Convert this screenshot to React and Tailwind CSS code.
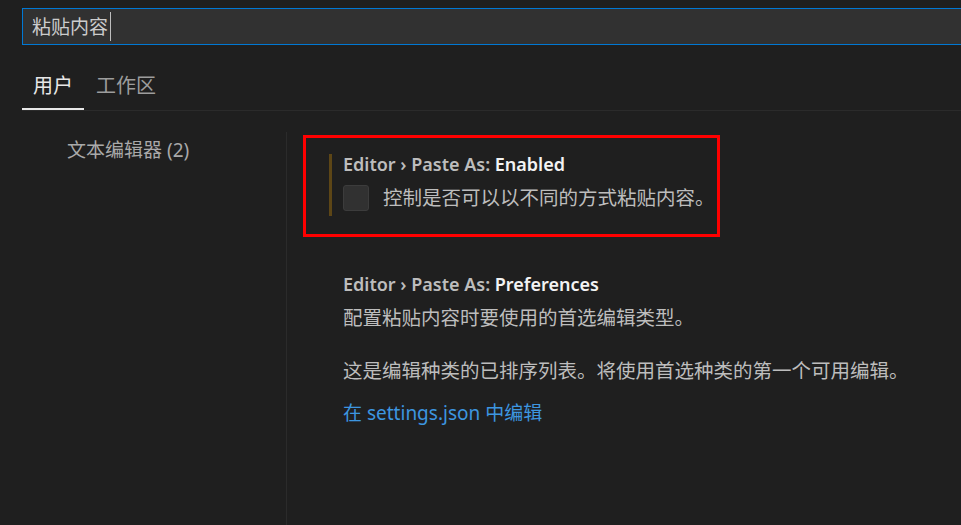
import React from "react";

const FONT = {
  fontFamily: '"Noto Sans", "Noto Sans CJK SC", sans-serif',
};

function SettingTitle({ prefix, label }) {
  return (
    <div className="text-[18px] leading-[20px] font-semibold whitespace-nowrap">
      <span className="text-[#bdbdbd]">{prefix}</span>
      <span className="text-[#f3f3f3]">{label}</span>
    </div>
  );
}

export default function App() {
  return (
    <div
      className="w-[961px] h-[525px] bg-[#1f1f1f] overflow-hidden flex flex-col"
      style={FONT}
    >
      {/* search */}
      <div className="pt-[8px] pl-[22px]">
        <div className="h-[37px] bg-[#313131] border-l border-t border-b border-[#0078d4] flex items-center pl-[9px]">
          <span className="text-[19px] text-[#cccccc] leading-none mt-[2px]">粘贴内容</span>
          <span className="w-px h-[29px] bg-[#bdbdbd] ml-[2px]" />
        </div>
      </div>

      {/* tabs */}
      <div className="mt-[18px] ml-[22px] flex border-b border-[#2b2b2b]">
        <div className="h-[47px] px-[11px] pt-[1px] flex items-center border-b-2 border-[#e7e7e7] text-[20px] text-[#e7e7e7]">
          用户
        </div>
        <div className="h-[47px] px-[12px] pt-[1px] flex items-center border-b-2 border-transparent text-[20px] text-[#9d9d9d]">
          工作区
        </div>
      </div>

      {/* body */}
      <div className="flex flex-1 mt-[21px] min-h-0">
        <div className="w-[287px] shrink-0 border-r border-[#2b2b2b] pt-[4px] pl-[67px]">
          <div className="text-[19px] leading-[28px] text-[#a9a9a9] whitespace-nowrap">
            文本编辑器 (2)
          </div>
        </div>

        <div className="flex-1 pl-[16px]">
          {/* highlighted setting */}
          <div className="mt-[3px] w-[417px] h-[102px] border-[3px] border-[#ff0000] pt-[16px] pl-[23px]">
            <div className="flex h-[62px]">
              <div className="w-[3px] bg-[#5d4616]" />
              <div className="pl-[11px]">
                <SettingTitle prefix="Editor › Paste As: " label="Enabled" />
                <div className="mt-[11px] flex items-center h-[26px]">
                  <div className="w-[26px] h-[26px] rounded-[3px] bg-[#313131] border border-[#3c3c3c]" />
                  <span className="ml-[14px] text-[19.5px] leading-[28px] text-[#bdbdbd] whitespace-nowrap">
                    控制是否可以以不同的方式粘贴内容。
                  </span>
                </div>
              </div>
            </div>
          </div>

          {/* second setting */}
          <div className="mt-[37px] pl-[26px] flex">
            <div className="w-[3px]" />
            <div className="pl-[11px]">
              <SettingTitle prefix="Editor › Paste As: " label="Preferences" />
              <div className="mt-[10px] text-[19.5px] leading-[28px] text-[#bdbdbd] whitespace-nowrap">
                配置粘贴内容时要使用的首选编辑类型。
              </div>
              <div className="mt-[25px] text-[19.5px] leading-[28px] text-[#bdbdbd] whitespace-nowrap">
                这是编辑种类的已排序列表。将使用首选种类的第一个可用编辑。
              </div>
              <div className="mt-[14px] text-[19px] leading-[28px] text-[#3d96e0] whitespace-nowrap">
                在 settings.json 中编辑
              </div>
            </div>
          </div>
        </div>
      </div>
    </div>
  );
}
